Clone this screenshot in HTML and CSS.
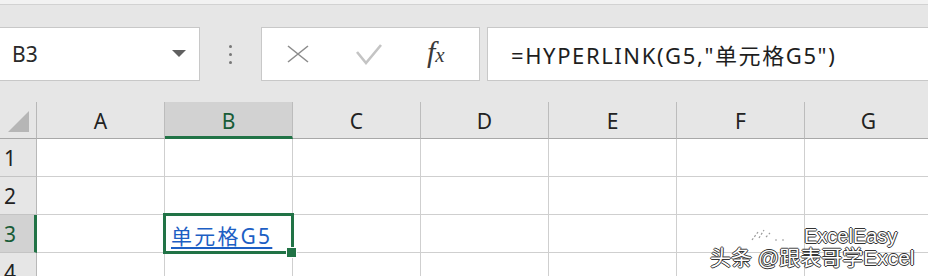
FILE: index.html
```html
<html>
  <head>
    <title>HYPERLINK</title>
    <meta charset="utf-8">
    <link rel="stylesheet" href="styles.css">
  </head>
  <body>
    <div class="top-strip"></div>

    <div class="formula-bar">
      <div class="name-box">
        <span>B3</span>
        <svg class="drop" width="14" height="7" viewBox="0 0 14 7"><path d="M0 0 H14 L7 7 Z" fill="#606060"/></svg>
      </div>
      <div class="grip"><i></i><i></i><i></i></div>
      <div class="fx-buttons">
        <svg width="22" height="18" viewBox="0 0 22 18"><path d="M1 1 L21 17 M21 1 L1 17" stroke="#8c8c8c" stroke-width="1.6" fill="none"/></svg>
        <svg width="26" height="21" viewBox="0 0 26 21"><path d="M1 8 L10 19 L25 1" stroke="#c4c4c4" stroke-width="2.6" fill="none"/></svg>
        <span class="fx">f<sub>x</sub></span>
      </div>
      <div class="formula-input">=HYPERLINK(G5,"单元格G5")</div>
    </div>

    <div class="sheet">
      <div class="corner"><svg width="21" height="21" viewBox="0 0 21 21"><path d="M21 0 V21 H0 Z" fill="#b6b6b6"/></svg></div>
      <div class="col-head">A</div>
      <div class="col-head active">B</div>
      <div class="col-head">C</div>
      <div class="col-head">D</div>
      <div class="col-head">E</div>
      <div class="col-head">F</div>
      <div class="col-head">G</div>

      <div class="row-head">1</div>
      <div class="cell"></div><div class="cell"></div><div class="cell"></div><div class="cell"></div><div class="cell"></div><div class="cell"></div><div class="cell"></div>

      <div class="row-head">2</div>
      <div class="cell"></div><div class="cell"></div><div class="cell"></div><div class="cell"></div><div class="cell"></div><div class="cell"></div><div class="cell"></div>

      <div class="row-head active">3</div>
      <div class="cell"></div>
      <div class="cell selected"><a href="#G5">单元格G5</a><span class="handle"></span></div>
      <div class="cell"></div><div class="cell"></div><div class="cell"></div><div class="cell"></div><div class="cell"></div>

      <div class="row-head">4</div>
      <div class="cell"></div><div class="cell"></div><div class="cell"></div><div class="cell"></div><div class="cell"></div><div class="cell"></div><div class="cell"></div>
    </div>

    <div class="watermark">
      <div class="brand">
        <svg width="40" height="18" viewBox="0 0 40 18"><path d="M2 12 L8 4 M9 10 L14 2 M16 9 L20 5 M25 12 L27 12 M32 12 L34 12" stroke="#9a9a9a" stroke-width="1.2" stroke-dasharray="2 2" fill="none"/></svg>
        <span>ExcelEasy</span>
      </div>
      <div class="handle-name">头条 @跟表哥学Excel</div>
    </div>
  </body>
</html>
```

FILE: styles.css
```css
body {
  margin: 0;
  width: 928px;
  height: 276px;
  overflow: hidden;
  position: relative;
  background: #e6e6e6;
  font-family: "Noto Sans", "Open Sans", "Noto Sans CJK SC", sans-serif;
  color: #222;
}

.top-strip {
  height: 4px;
  background: #f2f2f2;
  border-bottom: 1px solid #d2d2d2;
}

.formula-bar {
  display: flex;
  align-items: stretch;
  height: 54px;
  margin-top: 22px;
}

.name-box,
.fx-buttons,
.formula-input {
  box-sizing: border-box;
  background: #fff;
  border: 1px solid #c8c8c8;
}

.name-box {
  width: 200px;
  border-left: none;
  display: flex;
  align-items: center;
  justify-content: space-between;
  padding: 0 13px 0 12px;
  font-size: 21px;
  color: #2a2a2a;
}
.name-box .drop {
  margin-top: -2px;
}

.grip {
  width: 61px;
  display: flex;
  flex-direction: column;
  align-items: center;
  justify-content: center;
  gap: 5px;
}
.grip i {
  width: 3px;
  height: 3px;
  border-radius: 50%;
  background: #777;
}

.fx-buttons {
  width: 219px;
  display: flex;
  align-items: center;
  padding-left: 25px;
  gap: 47px;
}
.fx {
  font-family: "Liberation Serif", "DejaVu Serif", serif;
  font-style: italic;
  font-size: 30px;
  color: #3a3a3a;
  margin-left: -2px;
  margin-top: -5px;
}
.fx sub {
  font-size: 21px;
  vertical-align: 0;
  margin-left: 0;
}

.formula-input {
  flex: 1;
  margin-left: 7px;
  margin-right: -10px;
  display: flex;
  align-items: center;
  padding-left: 23px;
  font-size: 22px;
  letter-spacing: 1.6px;
  color: #1e1e1e;
}

.sheet {
  display: grid;
  grid-template-columns: 37px repeat(7, 128px);
  grid-template-rows: 37px repeat(4, 38px);
  margin-top: 21px;
}

.corner,
.col-head,
.row-head,
.cell {
  box-sizing: border-box;
}

.corner {
  border-right: 1px solid #b8b8b8;
  border-bottom: 1px solid #a8a8a8;
  display: flex;
  align-items: flex-end;
  justify-content: flex-end;
  padding: 0 7px 6px 0;
}

.col-head {
  border-right: 1px solid #bcbcbc;
  border-bottom: 1px solid #a8a8a8;
  display: flex;
  align-items: center;
  justify-content: center;
  font-size: 21px;
  color: #222;
  padding-top: 2px;
}
.col-head.active {
  background: #d2d2d2;
  color: #185c37;
  border-bottom: 3px solid #217346;
  padding-top: 4px;
}

.row-head {
  border-right: 1px solid #b8b8b8;
  border-bottom: 1px solid #c4c4c4;
  display: flex;
  align-items: center;
  padding-left: 4px;
  font-size: 21px;
  color: #222;
}
.row-head.active {
  background: #d2d2d2;
  color: #185c37;
  border-right: 3px solid #217346;
}

.cell {
  border-right: 1px solid #cfcfcf;
  border-bottom: 1px solid #cfcfcf;
  background: #fff;
}

.cell.selected {
  position: relative;
  display: flex;
  align-items: center;
  padding-left: 6px;
}
.cell.selected::before {
  content: "";
  position: absolute;
  left: -2px;
  top: -2px;
  right: -2px;
  bottom: -2px;
  border: 3px solid #217346;
  box-sizing: border-box;
}
.cell.selected a {
  color: #1d5fc4;
  font-size: 21px;
  letter-spacing: 2.2px;
  font-family: "Noto Sans", "Noto Sans CJK SC", sans-serif;
  text-decoration: underline;
  text-underline-offset: 3px;
  margin-top: 2px;
}
.handle {
  position: absolute;
  right: -5px;
  bottom: -6px;
  width: 9px;
  height: 9px;
  background: #217346;
  border: 1px solid #fff;
}

.watermark {
  position: absolute;
  left: 710px;
  top: 226px;
  color: #fff;
  text-shadow: 1px 0 0 #333, -1px 0 0 #333, 0 1px 0 #333, 0 -1px 0 #333;
}
.brand {
  display: flex;
  align-items: flex-end;
  margin-left: 40px;
  height: 20px;
}
.brand span {
  font-family: "Liberation Sans", Arial, sans-serif;
  font-size: 20px;
  margin-left: 14px;
  line-height: 20px;
}
.handle-name {
  font-family: "Liberation Sans", "Noto Sans CJK SC", sans-serif;
  font-size: 21px;
  line-height: 28px;
  margin-top: -2px;
  white-space: nowrap;
}
```
